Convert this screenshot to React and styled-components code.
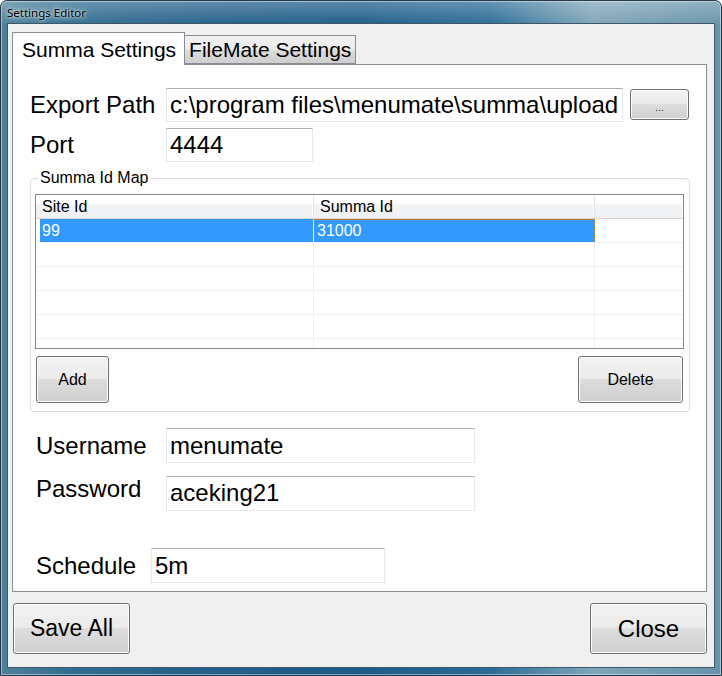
import styled, { createGlobalStyle } from "styled-components";

const GlobalStyle = createGlobalStyle`
  html, body {
    margin: 0;
    padding: 0;
    background: #ffffff;
  }
  body {
    font-family: "Liberation Sans", Arial, sans-serif;
  }
  * {
    box-sizing: border-box;
  }
`;

const rows = [
  { siteId: "99", summaId: "31000", selected: true },
  { siteId: "", summaId: "" },
  { siteId: "", summaId: "" },
  { siteId: "", summaId: "" },
  { siteId: "", summaId: "" },
  { siteId: "", summaId: "" },
];

export default function App() {
  return (
    <>
      <GlobalStyle />
      <Window>
        <TitleBar>
          <Title>Settings Editor</Title>
        </TitleBar>

        <Client>
          <TabStrip>
            <Tab $active>Summa Settings</Tab>
            <Tab>FileMate Settings</Tab>
          </TabStrip>

          <TabPage>
            <Field $top={23} $indent={17}>
              <Label $width={136}>Export Path</Label>
              <TextBox $width={457} readOnly value="c:\program files\menumate\summa\upload" />
              <BrowseButton>...</BrowseButton>
            </Field>

            <Field $top={6} $indent={17}>
              <Label $width={136}>Port</Label>
              <TextBox $width={147} readOnly value="4444" />
            </Field>

            <GroupBox>
              <Legend>Summa Id Map</Legend>
              <Grid>
                <HeaderRow>
                  <HeaderCell>Site Id</HeaderCell>
                  <HeaderCell>Summa Id</HeaderCell>
                  <HeaderCell />
                </HeaderRow>
                {rows.map((row, i) => (
                  <Row key={i}>
                    <Spacer />
                    <Cell $selected={row.selected}>{row.siteId}</Cell>
                    <Cell $selected={row.selected} $focus={row.selected}>
                      {row.summaId}
                    </Cell>
                    <Cell />
                  </Row>
                ))}
              </Grid>
              <GroupActions>
                <Button $width={73} $height={47} $size={16}>
                  Add
                </Button>
                <Button $width={105} $height={47} $size={16}>
                  Delete
                </Button>
              </GroupActions>
            </GroupBox>

            <Field $top={16} $indent={23}>
              <Label $width={130}>Username</Label>
              <TextBox $width={309} $height={35} readOnly value="menumate" />
            </Field>

            <Field $top={12} $indent={23}>
              <Label $width={130} $raise={8}>
                Password
              </Label>
              <TextBox $width={309} $height={35} readOnly value="aceking21" />
            </Field>

            <Field $top={37} $indent={23}>
              <Label $width={115}>Schedule</Label>
              <TextBox $width={234} $height={35} readOnly value="5m" />
            </Field>
          </TabPage>

          <Footer>
            <Button $width={117} $height={51} $size={23}>
              Save All
            </Button>
            <Button $width={117} $height={51} $size={24}>
              Close
            </Button>
          </Footer>
        </Client>
      </Window>
    </>
  );
}

const Window = styled.div`
  width: 722px;
  height: 676px;
  display: flex;
  flex-direction: column;
  padding: 0 6px 7px 6px;
  border: 1px solid #24384a;
  border-radius: 7px 7px 0 0;
  overflow: hidden;
  box-shadow: inset 0 0 0 1px rgba(255, 255, 255, 0.45);
  background:
    linear-gradient(180deg, rgba(255, 255, 255, 0.28), rgba(255, 255, 255, 0) 26px),
    linear-gradient(
      90deg,
      #4f8199 0%,
      #2f6d90 10%,
      #225f8a 30%,
      #1d5c88 50%,
      #2a6c96 68%,
      #7ea5b8 82%,
      #6693aa 100%
    );
`;

const TitleBar = styled.div`
  height: 22px;
  display: flex;
  align-items: center;
`;

const Title = styled.span`
  font-family: "Noto Sans", "DejaVu Sans", sans-serif;
  font-size: 11.5px;
  color: #000000;
  text-shadow: 0 0 6px rgba(255, 255, 255, 0.9), 0 0 3px rgba(255, 255, 255, 0.9);
`;

const Client = styled.div`
  flex: 1;
  display: flex;
  flex-direction: column;
  padding: 8px 7px 0 4px;
  background: #f0f0f0;
  border: 1px solid #3f5666;
`;

const TabStrip = styled.div`
  height: 32px;
  display: flex;
  align-items: flex-end;
`;

const Tab = styled.div`
  position: relative;
  z-index: ${(p) => (p.$active ? 2 : 1)};
  height: ${(p) => (p.$active ? "33px" : "29px")};
  margin-bottom: ${(p) => (p.$active ? "-1px" : "0")};
  padding: ${(p) => (p.$active ? "2px 8px 0 9px" : "1px 4px 0 4px")};
  display: flex;
  align-items: center;
  font-size: 21px;
  color: #000000;
  border: 1px solid #898c95;
  border-bottom: ${(p) => (p.$active ? "none" : "1px solid #898c95")};
  border-left: ${(p) => (p.$active ? "1px solid #898c95" : "none")};
  background: ${(p) =>
    p.$active ? "#ffffff" : "linear-gradient(180deg, #f2f2f2 0%, #ebebeb 50%, #dcdcdc 51%, #cfcfcf 100%)"};
`;

const TabPage = styled.div`
  height: 528px;
  display: flex;
  flex-direction: column;
  background: #ffffff;
  border: 1px solid #898c95;
`;

const Field = styled.div`
  display: flex;
  align-items: center;
  margin-top: ${(p) => p.$top}px;
  padding-left: ${(p) => p.$indent}px;
`;

const Label = styled.span`
  width: ${(p) => p.$width}px;
  flex-shrink: 0;
  font-size: 24px;
  color: #000000;
  margin-bottom: ${(p) => p.$raise || 0}px;
`;

const TextBox = styled.input`
  width: ${(p) => p.$width}px;
  height: ${(p) => p.$height || 34}px;
  padding: 0 0 0 3px;
  font-family: "Liberation Sans", Arial, sans-serif;
  font-size: 24px;
  color: #000000;
  background: #ffffff;
  border: 1px solid #e3e9ef;
  border-top-color: #abadb3;
  border-radius: 0;
  outline: none;
`;

const Button = styled.button`
  width: ${(p) => p.$width}px;
  height: ${(p) => p.$height}px;
  padding: 0;
  font-family: "Liberation Sans", Arial, sans-serif;
  font-size: ${(p) => p.$size}px;
  color: #000000;
  border: 1px solid #707070;
  border-radius: 3px;
  box-shadow: inset 0 0 0 1px #fbfbfb;
  background: linear-gradient(180deg, #f2f2f2 0%, #ebebeb 49%, #dddddd 50%, #cfcfcf 100%);
  cursor: pointer;
`;

const BrowseButton = styled(Button)`
  width: 59px;
  height: 31px;
  margin-left: 7px;
  align-self: flex-start;
  margin-top: 1px;
  padding-top: 4px;
  font-size: 11px;
  color: #333333;
`;

const GroupBox = styled.div`
  position: relative;
  width: 660px;
  margin: 16px 0 0 17px;
  padding: 15px 5px 8px 4px;
  border: 1px solid #d5dfe5;
  border-radius: 4px;
`;

const Legend = styled.span`
  position: absolute;
  top: -10px;
  left: 7px;
  padding: 0 2px;
  font-size: 16px;
  line-height: 18px;
  color: #000000;
  background: #ffffff;
`;

const Grid = styled.div`
  height: 155px;
  overflow: hidden;
  background: #ffffff;
  border: 1px solid #828790;
`;

const HeaderRow = styled.div`
  display: grid;
  grid-template-columns: 278px 281px 1fr;
  height: 24px;
  border-bottom: 1px solid #d5d5d5;
  background: linear-gradient(180deg, #ffffff 0%, #ffffff 40%, #f3f4f6 41%, #eff0f2 100%);
`;

const HeaderCell = styled.div`
  display: flex;
  align-items: center;
  padding-left: 6px;
  font-size: 16px;
  color: #000000;
  border-right: 1px solid #e2e3e5;
  box-shadow: inset -1px 0 0 #ffffff;

  &:last-child {
    border-right: none;
  }
`;

const Row = styled.div`
  display: grid;
  grid-template-columns: 4px 274px 281px 1fr;
  height: 24px;
  border-bottom: 1px solid #f0f0f0;
`;

const Spacer = styled.div``;

const Cell = styled.div`
  display: flex;
  align-items: center;
  padding-left: ${(p) => (p.$selected ? "2px" : "0")};
  font-size: 16px;
  color: ${(p) => (p.$selected ? "#ffffff" : "#000000")};
  background: ${(p) => (p.$selected ? "#3399ff" : "#ffffff")};
  border-right: 1px solid #f0f0f0;
  border-top: ${(p) => (p.$selected ? "1px dotted #c8782a" : "none")};

  &:nth-child(3) {
    padding-left: ${(p) => (p.$selected ? "3px" : "0")};
    border-right: ${(p) => (p.$focus ? "1px dotted #c8782a" : "1px solid #f0f0f0")};
  }

  &:last-child {
    border-right: none;
  }
`;

const GroupActions = styled.div`
  display: flex;
  justify-content: space-between;
  margin-top: 7px;
  padding: 0 1px;
`;

const Footer = styled.div`
  display: flex;
  justify-content: space-between;
  padding: 11px 0 0 1px;
`;
